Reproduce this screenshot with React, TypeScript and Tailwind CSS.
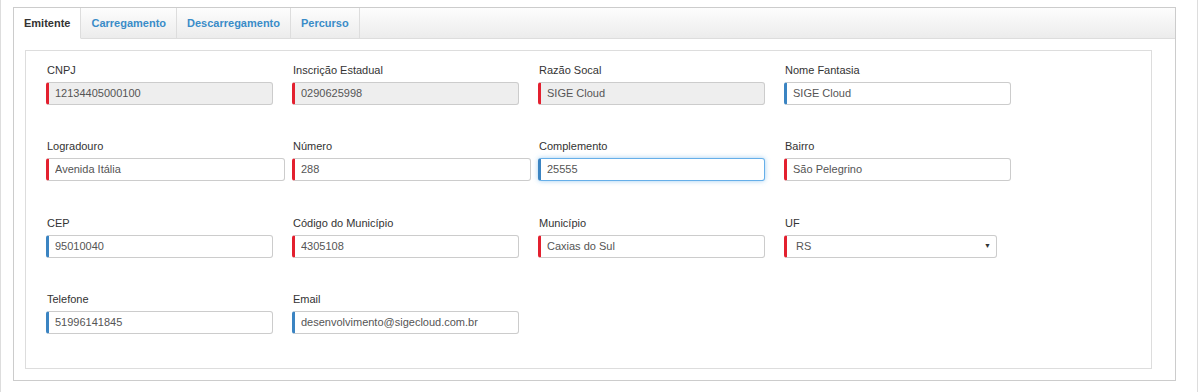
import React from "react";

type Field = {
  label: string;
  value: string;
  w: string;
  accent: "red" | "blue";
  readOnly?: boolean;
  focus?: boolean;
  select?: boolean;
};

const rows: Field[][] = [
  [
    { label: "CNPJ", value: "12134405000100", w: "w-[227px]", accent: "red", readOnly: true },
    { label: "Inscrição Estadual", value: "0290625998", w: "w-[227px]", accent: "red", readOnly: true },
    { label: "Razão Socal", value: "SIGE Cloud", w: "w-[227px]", accent: "red", readOnly: true },
    { label: "Nome Fantasia", value: "SIGE Cloud", w: "w-[227px]", accent: "blue" },
  ],
  [
    { label: "Logradouro", value: "Avenida Itália", w: "w-[239px]", accent: "red" },
    { label: "Número", value: "288", w: "w-[239px]", accent: "red" },
    { label: "Complemento", value: "25555", w: "w-[227px]", accent: "blue", focus: true },
    { label: "Bairro", value: "São Pelegrino", w: "w-[227px]", accent: "red" },
  ],
  [
    { label: "CEP", value: "95010040", w: "w-[227px]", accent: "blue" },
    { label: "Código do Município", value: "4305108", w: "w-[227px]", accent: "red" },
    { label: "Município", value: "Caxias do Sul", w: "w-[227px]", accent: "red" },
    { label: "UF", value: "RS", w: "w-[213px]", accent: "red", select: true },
  ],
  [
    { label: "Telefone", value: "51996141845", w: "w-[227px]", accent: "blue" },
    { label: "Email", value: "desenvolvimento@sigecloud.com.br", w: "w-[227px]", accent: "blue" },
  ],
];

// spacing above each row (rows aren't perfectly even in the original)
const rowGaps = ["mt-0", "mt-[33px]", "mt-[34px]", "mt-[33px]"];

const tabs = ["Emitente", "Carregamento", "Descarregamento", "Percurso"];

function Input({ f }: { f: Field }) {
  const accent = f.accent === "red" ? "border-l-[#e3202f]" : "border-l-[#3b84c2]";
  const border = f.focus
    ? "border-[#66afe9] shadow-[0_0_5px_rgba(102,175,233,0.6)]"
    : "border-[#cccccc]";
  return (
    <div
      className={`${f.w} h-[23px] flex items-center rounded-[3px] border border-l-[3px] ${border} ${accent} ${
        f.readOnly ? "bg-[#eeeeee]" : "bg-white"
      } ${f.select ? "pl-[9px] pr-[5px]" : "pl-[6px]"} text-[11px] text-[#555555]`}
    >
      <span className="flex-1 truncate">{f.value}</span>
      {f.select && <span className="text-[7px] text-[#333333]">▼</span>}
    </div>
  );
}

export default function App() {
  return (
    <div
      className="w-[1198px] h-[392px] bg-white border-x border-[#dddddd]"
      style={{ fontFamily: '"Liberation Sans", Arial, sans-serif' }}
    >
      <div className="ml-[12px] pt-[7px]">
        <div className="w-[1163px] h-[374px] border border-[#cccccc]">
          <div className="h-[31px] flex border-b border-[#dddddd] bg-gradient-to-b from-[#fdfdfd] to-[#ececec]">
            {tabs.map((t, i) => (
              <div
                key={t}
                className={`h-[31px] flex items-center px-[10px] border-r border-[#dddddd] text-[11px] font-bold ${
                  i === 0 ? "bg-white text-[#333333] border-b border-b-white" : "text-[#3a8cc8]"
                }`}
              >
                {t}
              </div>
            ))}
          </div>
          <div className="pl-[11px] pt-[11px]">
            <div className="w-[1127px] h-[319px] border border-[#dddddd] pl-[20px] pt-[11px]">
              {rows.map((row, ri) => (
                <div key={ri} className={`flex ${rowGaps[ri]}`}>
                  {row.map((f) => (
                    <div key={f.label} className="w-[246px] flex flex-col">
                      <label className="h-[16px] leading-[16px] mb-[4px] pl-[1px] text-[11px] text-[#333333]">
                        {f.label}
                      </label>
                      <Input f={f} />
                    </div>
                  ))}
                </div>
              ))}
            </div>
          </div>
        </div>
      </div>
    </div>
  );
}
